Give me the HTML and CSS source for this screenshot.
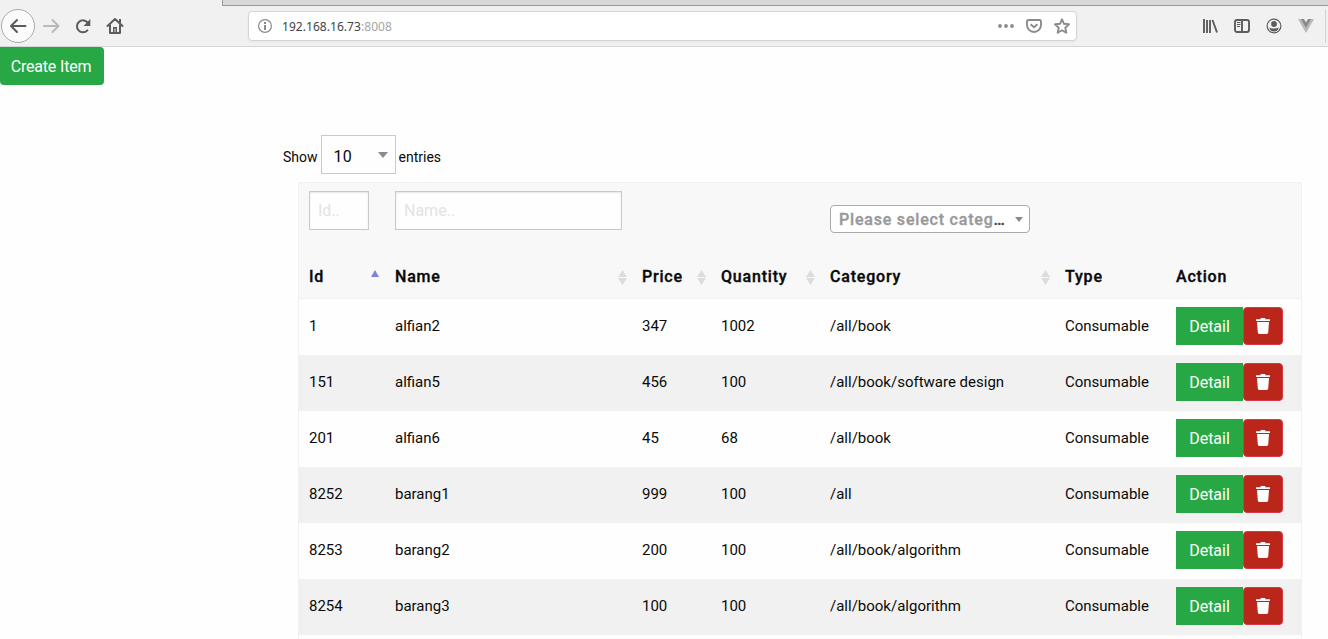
FILE: index.html
```html
<!DOCTYPE html>
<html lang="en">
<head>
<meta charset="utf-8">
<title>Items</title>
<link rel="stylesheet" href="styles.css">
</head>
<body>
<svg class="defs" width="0" height="0">
  <symbol id="trash" viewBox="0 0 14 16"><path d="M0 1.2h4.3L5 0h4l.7 1.2H14v1.9H0zM1 4h12l-.8 10.6q-.1 1.4-1.5 1.4H3.3q-1.4 0-1.5-1.4z"/></symbol>
  <symbol id="sort" viewBox="0 0 9 15"><path d="M0 7 4.500 0 9 7zM0 8h9L4.500 15z"/></symbol>
</svg>
<div class="tabs"><div class="tab-active"></div><div class="tab-rest"></div></div>
<header class="toolbar">
  <nav class="nav">
    <span class="back"><svg width="18" height="16" viewBox="0 0 18 16"><path d="M16.500 8H2M8 2 2 8l6 6"/></svg></span>
    <svg class="forward" width="18" height="16" viewBox="0 0 18 16"><path d="M1 8h14M9.500 2l6 6-6 6"/></svg>
    <svg class="reload" width="16" height="16" viewBox="0 0 16 16"><path d="M12.400 12.400A6 6 0 1 1 13 5"/><path class="solid" d="M15.300 1v7H8.500z"/></svg>
    <svg class="home" width="18" height="18" viewBox="0 0 18 18"><path d="M1.500 9 9 2l7.500 7M4 8v8h10V8"/><path class="solid" d="M7 10h4v6H7zM13 2h2v4h-2z"/><path class="knob" d="M9 12v2.500"/></svg>
  </nav>
  <div class="urlbar">
    <svg class="info" width="14" height="14" viewBox="0 0 14 14"><circle cx="7" cy="7" r="6.400"/><path d="M7 6v5M7 3v2"/></svg>
    <span class="url">192.168.16.73<span class="port">:8008</span></span>
    <span class="url-actions">
      <svg width="16" height="16" viewBox="0 0 16 16"><g class="dots"><circle cx="2" cy="8" r="1.900"/><circle cx="8" cy="8" r="1.900"/><circle cx="14" cy="8" r="1.900"/></g></svg>
      <svg width="16" height="16" viewBox="0 0 16 16"><path d="M2.500 2h11q1.500 0 1.500 1.500V7A7 7 0 0 1 1 7V3.500Q1 2 2.500 2zM4.600 6.200 8 9.300l3.400-3.100"/></svg>
      <svg width="16" height="16" viewBox="0 0 16 16"><path d="m8 1.300 2 4.500 5 .5-3.700 3.400 1 5L8 12.200l-4.300 2.500 1-5L1 6.300l5-.5z"/></svg>
    </span>
  </div>
  <div class="tools">
    <svg width="16" height="16" viewBox="0 0 16 16"><path d="M2 1v14M5 2v13M8 2v13M10.500 2 15 14.500"/></svg>
    <svg width="16" height="16" viewBox="0 0 16 16"><rect x="1" y="2" width="14" height="12" rx="2"/><path d="M8 2v12"/><path class="thin" d="M3 4.500h3.500M3 6.500h3.500M3 8.500h3"/></svg>
    <svg width="16" height="16" viewBox="0 0 16 16"><circle class="ring" cx="8" cy="8" r="6.900"/><circle class="solid" cx="8" cy="6" r="2.900"/><path class="solid" d="M3.200 9.500q1.600 1 4.800 1t4.800-1q-.8 4-4.800 4t-4.800-4z"/></svg>
    <svg width="16" height="16" viewBox="0 0 16 16"><path class="v-out" d="M0 1h16L8 15z"/><path class="v-in" d="M3 1h3l2 3.300L10 1h3L8 9.800z"/><path class="v-gap" d="M6 1h4L8 4.300z"/></svg>
  </div>
  <span class="edge"></span>
</header>
<main>
  <button class="create">Create Item</button>
  <div class="length"><span class="word">Show</span> <span class="select">10<i class="caret"></i></span> <span class="word">entries</span></div>
  <table>
    <colgroup><col class="c-id"><col class="c-name"><col class="c-price"><col class="c-qty"><col class="c-cat"><col class="c-type"><col class="c-act"></colgroup>
    <thead>
      <tr class="filters">
        <th><input class="in-id" placeholder="Id.."></th>
        <th><input class="in-name" placeholder="Name.."></th>
        <th></th><th></th>
        <th><div class="select2"><span class="select2-text"><span class="hint">Please select categ</span>…</span><i class="caret small"></i></div></th>
        <th></th><th></th>
      </tr>
      <tr class="titles">
        <th><div class="head">Id<i class="asc"></i></div></th>
        <th><div class="head">Name<svg><use href="#sort"/></svg></div></th>
        <th><div class="head">Price<svg><use href="#sort"/></svg></div></th>
        <th><div class="head">Quantity<svg><use href="#sort"/></svg></div></th>
        <th><div class="head">Category<svg><use href="#sort"/></svg></div></th>
        <th><div class="head">Type</div></th>
        <th><div class="head">Action</div></th>
      </tr>
    </thead>
    <tbody>
      <tr><td>1</td><td>alfian2</td><td>347</td><td>1002</td><td>/all/book</td><td>Consumable</td><td><div class="actions"><button class="detail">Detail</button><button class="delete"><svg><use href="#trash"/></svg></button></div></td></tr>
      <tr><td>151</td><td>alfian5</td><td>456</td><td>100</td><td>/all/book/software design</td><td>Consumable</td><td><div class="actions"><button class="detail">Detail</button><button class="delete"><svg><use href="#trash"/></svg></button></div></td></tr>
      <tr><td>201</td><td>alfian6</td><td>45</td><td>68</td><td>/all/book</td><td>Consumable</td><td><div class="actions"><button class="detail">Detail</button><button class="delete"><svg><use href="#trash"/></svg></button></div></td></tr>
      <tr><td>8252</td><td>barang1</td><td>999</td><td>100</td><td>/all</td><td>Consumable</td><td><div class="actions"><button class="detail">Detail</button><button class="delete"><svg><use href="#trash"/></svg></button></div></td></tr>
      <tr><td>8253</td><td>barang2</td><td>200</td><td>100</td><td>/all/book/algorithm</td><td>Consumable</td><td><div class="actions"><button class="detail">Detail</button><button class="delete"><svg><use href="#trash"/></svg></button></div></td></tr>
      <tr><td>8254</td><td>barang3</td><td>100</td><td>100</td><td>/all/book/algorithm</td><td>Consumable</td><td><div class="actions"><button class="detail">Detail</button><button class="delete"><svg><use href="#trash"/></svg></button></div></td></tr>
      <tr class="next"><td></td><td></td><td></td><td></td><td></td><td></td><td></td></tr>
    </tbody>
  </table>
</main>
</body>
</html>
```

FILE: styles.css
```css
* { box-sizing: border-box; }
body { margin: 0; height: 639px; overflow: hidden; background: #fefefe; color: #0a0a0a; font-family: Roboto, sans-serif; font-size: 16px; }
button, input { font: inherit; margin: 0; }
svg { display: block; fill: none; }
.defs { position: absolute; }

.tabs { display: flex; height: 6px; background: #f1f1f1; }
.tab-active { width: 222px; }
.tab-rest { flex: 1; background: #d8d8d8; border-left: 1px solid #999; border-bottom: 1px solid #999; }
.toolbar { display: flex; align-items: center; height: 41px; background: #f1f1f1; border-bottom: 1px solid #d6d6d6; }
.nav { display: flex; align-items: center; width: 248px; padding-left: 1px; }
.nav svg { stroke: #5c5c5c; stroke-width: 2; stroke-linecap: round; stroke-linejoin: round; }
.back { display: flex; align-items: center; justify-content: center; width: 34px; height: 34px; border: 1px solid #aaa; border-radius: 50%; background: #fbfbfb; }
.nav .forward { margin-left: 8px; stroke: #b9b9b9; }
.reload { margin-left: 14px; }
.home { margin-left: 15px; }
.nav .solid, .tools .solid { fill: #5c5c5c; stroke: none; }
.nav .knob { stroke: #f1f1f1; stroke-width: 1; }
.urlbar { display: flex; align-items: center; width: 829px; height: 30px; padding: 0 6px 0 9px; background: #fff; border: 1px solid #d4d4d4; border-radius: 4px; box-shadow: 0 1px 3px #0000000d; }
.info { stroke: #8b8b8b; stroke-width: 1.200; }
.info path { stroke-width: 2; }
.url { margin-left: 10px; font-family: "Noto Sans", sans-serif; font-size: 12px; letter-spacing: .05px; color: #444; }
.port { color: #a5a5a5; }
.url-actions { display: flex; gap: 12px; margin-left: auto; }
.url-actions svg { stroke: #8b8b8b; stroke-width: 1.900; stroke-linejoin: round; }
.dots { fill: #8b8b8b; stroke: none; }
.tools { display: flex; gap: 16px; margin-left: 125px; }
.tools svg { stroke: #5c5c5c; stroke-width: 1.900; }
.tools .thin { stroke-width: 1; }
.tools .ring { stroke-width: 1.200; }
.tools .v-out { fill: #b9b9b9; stroke: none; }
.tools .v-in { fill: #898989; stroke: none; }
.tools .v-gap { fill: #f1f1f1; stroke: none; }
.edge { width: 1px; height: 34px; margin-left: 11px; background: #d3d3d3; }

main { display: flex; flex-direction: column; align-items: flex-start; }
.create { width: 104px; height: 38px; padding: 0 2px 0 0; border: 0; border-radius: 0 4px 4px 4px; background: #28a745; color: #fff; text-align: center; letter-spacing: -.18px; }
.length { display: flex; align-items: center; gap: 3px; height: 39px; margin: 50px 0 0 283px; font-size: 14px; }
.word { padding-top: 5px; }
.select { display: flex; align-items: center; justify-content: space-between; width: 75px; height: 39px; padding: 3px 7px 0 12px; border: 1px solid #cacaca; background: #fefefe; font-size: 16px; letter-spacing: .2px; }
.caret { width: 0; height: 0; border: 5px solid transparent; border-top: 6px solid #8a8a8a; border-bottom: 0; margin-top: -3px; }
.caret.small { border-width: 5px 4px 0; margin: 0; }

table { width: 1004px; margin: 8px 0 0 298px; border-collapse: separate; border-spacing: 0; table-layout: fixed; border: 1px solid #f1f1f1; border-bottom: 0; }
.c-id { width: 86px; }
.c-name { width: 247px; }
.c-price { width: 79px; }
.c-qty { width: 109px; }
.c-cat { width: 235px; }
.c-type { width: 111px; }
.c-act { width: 135px; }
th { padding: 0 10px; text-align: left; background: #f8f8f8; font-weight: 500; letter-spacing: .8px; -webkit-text-stroke: .35px; white-space: nowrap; }
.filters { height: 72px; }
.filters th { vertical-align: middle; }
.filters input { display: block; height: 39px; margin-bottom: 17px; padding: 0 8px; border: 1px solid #cacaca; background: #fefefe; box-shadow: inset 0 1px 2px #0a0a0a1a; font-weight: 400; letter-spacing: 0; -webkit-text-stroke: 0; }
.filters input::placeholder { color: #e3e3e3; opacity: 1; }
.in-id { width: 60px; }
.in-name { width: 227px; }
.select2 { display: flex; align-items: center; justify-content: space-between; width: 200px; height: 28px; padding: 0 6px 0 8px; border: 1px solid #aaa; border-radius: 4px; background: #fff; }
.select2-text { color: #444; }
.hint { color: #999; }
.titles { height: 44px; }
.titles th { border-bottom: 1px solid #f1f1f1; }
.head { display: flex; align-items: center; justify-content: space-between; height: 20px; margin: 0 -5px 1px 0; }
.head svg { width: 9px; height: 15px; margin-top: 3px; fill: #dcdcdc; }
.asc { width: 0; height: 0; margin: -5px 1px 0 0; border: solid transparent; border-width: 0 4.500px 7px; border-bottom-color: #7d83dc; }
tbody tr { height: 56px; background: #fefefe; }
tbody tr:nth-child(even) { background: #f1f1f1; }
tbody .next { height: 4px; }
td { padding: 0 10px 2px; font-size: 15px; vertical-align: middle; white-space: nowrap; }
.actions { display: flex; }
.actions button { height: 38px; padding: 0; color: #fff; font-size: 16px; }
.detail { width: 67px; border: 0; background: #28a745; }
.delete { display: flex; align-items: center; justify-content: center; width: 40px; border: 1px solid #dc3545; border-radius: 4px; background: #bb261a; }
.delete svg { width: 14px; height: 16px; fill: #fff; }
```
